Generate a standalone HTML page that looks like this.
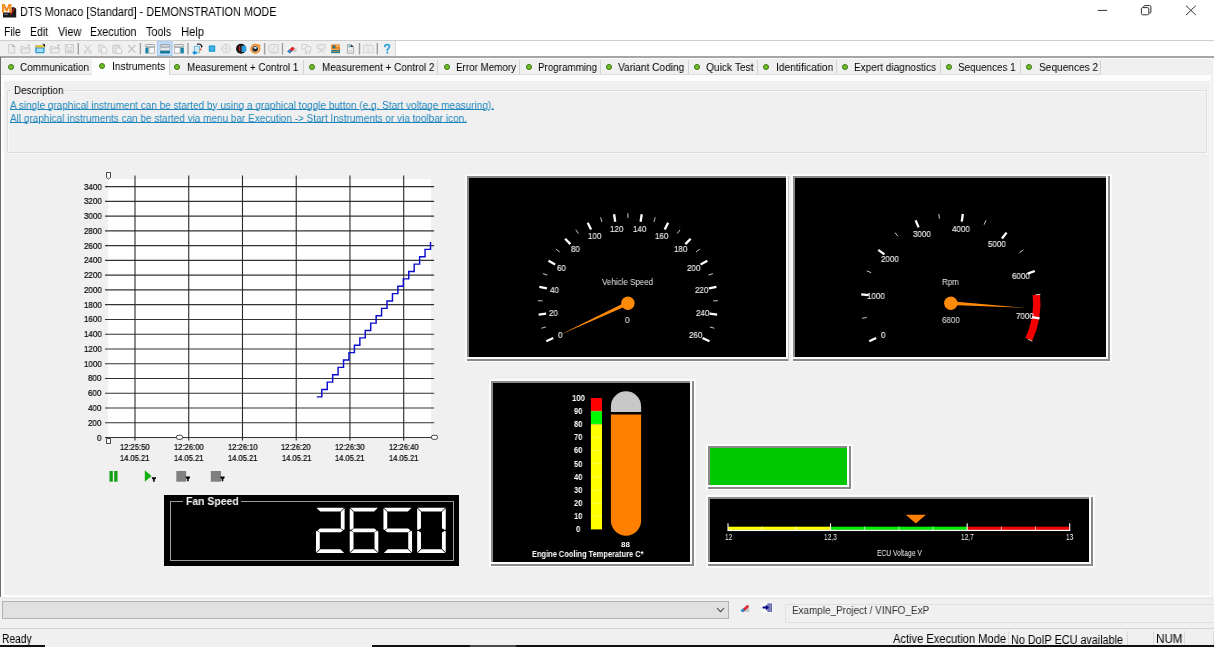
<!DOCTYPE html>
<html><head><meta charset="utf-8"><title>DTS Monaco</title>
<style>
*{margin:0;padding:0;box-sizing:border-box}
html,body{width:1214px;height:647px;overflow:hidden;background:#fff;font-family:"Liberation Sans",sans-serif}
body{position:relative}
.a{position:absolute}
.t{position:absolute;white-space:nowrap;line-height:1;transform-origin:0 50%;will-change:transform}
svg{position:absolute;overflow:visible}
</style></head><body>
<svg style="left:0;top:0" width="20" height="20" viewBox="0 0 20 20">
<path d="M3 12.4h8.6V7.2h2.6l2 1.6v8.8H3z" fill="#1c1c1e"/>
<path d="M10.6 14.6l3.6-6.4" stroke="#c01818" stroke-width="1.3" fill="none"/>
<path d="M4.4 14.4h3.4" stroke="#9a9a9a" stroke-width="0.8"/>
<path d="M2 12.7V3.9h2.7l2 4.6 2-4.6h2.8v8.8H9.2V7.6L7.4 11.6H6L4.3 7.6v5.1z" fill="#f0861a"/>
<path d="M2.8 11.5V4.6h1.1v6.9zM9.8 11.5V4.6h1v6.9z" fill="#fba63c"/>
</svg>
<div class="t" style="left:20.30px;top:5.64px;font-size:12px;color:#000;transform:scaleX(0.9055);">DTS Monaco [Standard] - DEMONSTRATION MODE</div>
<svg style="left:0;top:0" width="1214" height="24" viewBox="0 0 1214 24">
<path d="M1097.7 10.4h9.4" stroke="#333" stroke-width="1" fill="none"/>
<rect x="1141.4" y="7.6" width="7.4" height="7.2" rx="1.2" stroke="#333" stroke-width="1" fill="none"/>
<path d="M1143.6 7.4v-0.6a1.2 1.2 0 0 1 1.2-1.2h4.9a1.2 1.2 0 0 1 1.2 1.2v5.2a1.2 1.2 0 0 1-1.2 1.2h-0.7" stroke="#333" stroke-width="1" fill="none"/>
<path d="M1186 5.7l9.8 9.3M1195.8 5.7l-9.8 9.3" stroke="#333" stroke-width="1" fill="none"/>
</svg>
<div class="t" style="left:4.40px;top:26.04px;font-size:12px;color:#000;transform:scaleX(0.8582);">File</div>
<div class="t" style="left:30.10px;top:26.04px;font-size:12px;color:#000;transform:scaleX(0.8749);">Edit</div>
<div class="t" style="left:57.60px;top:26.04px;font-size:12px;color:#000;transform:scaleX(0.8993);">View</div>
<div class="t" style="left:90.20px;top:26.04px;font-size:12px;color:#000;transform:scaleX(0.8804);">Execution</div>
<div class="t" style="left:146.30px;top:26.04px;font-size:12px;color:#000;transform:scaleX(0.8995);">Tools</div>
<div class="t" style="left:181.10px;top:26.04px;font-size:12px;color:#000;transform:scaleX(0.9316);">Help</div>
<div class="a" style="left:0px;top:40px;width:1214px;height:1.3px;background:#cfcfcf;"></div>
<div class="a" style="left:0px;top:41.3px;width:395px;height:14.7px;background:#f0f0f0;"></div>
<div class="a" style="left:394.5px;top:41px;width:1px;height:15px;background:#d8d8d8;"></div>
<div class="a" style="left:0px;top:55.7px;width:1214px;height:2.2px;background:#a6a6a6;"></div>
<svg style="left:0;top:0" width="400" height="60" viewBox="0 0 400 60"><path d="M8.7 44.5h4l2 2v6.6h-6z" fill="#ededed" stroke="#c9c9c9" stroke-width="0.9"/><path d="M12.5 44.3v2.4h2.3z" fill="#9a9a9a"/><path d="M21 46.5h3l1 1h4.5v5.2h-8.5z" fill="#e6e6e6" stroke="#c9c9c9" stroke-width="0.9"/><path d="M22.5 48.8h8l-1.6 4h-8z" fill="#efefef" stroke="#c9c9c9" stroke-width="0.8"/><path d="M27.5 44.8l2.6 0.3-1 1.6z" fill="#aaa"/><rect x="35.2" y="45.2" width="9.4" height="8" rx="1.2" fill="#2f9fd4"/><rect x="35.2" y="45.2" width="9.4" height="2.4" rx="1" fill="#f1c23e"/><rect x="36.6" y="48.4" width="6.6" height="3.6" rx="0.6" fill="#a5dcf3"/><path d="M42.4 43.6l2.4 0.6 0.6 2.6-1.2-0.6z" fill="#111"/><path d="M50.5 46.5h3l1 1h4.5v5.2h-8.5z" fill="#e6e6e6" stroke="#c9c9c9" stroke-width="0.9"/><path d="M52 48.8h8l-1.6 4h-8z" fill="#efefef" stroke="#c9c9c9" stroke-width="0.8"/><path d="M57 44.6l2.8 0.4-1.2 1.8z" fill="#aaa"/><rect x="65.4" y="44.6" width="8.2" height="8.4" fill="#e6e6e6" stroke="#c9c9c9" stroke-width="0.9"/><rect x="67.2" y="44.8" width="4.6" height="3" fill="#f6f6f6" stroke="#c9c9c9" stroke-width="0.6"/><rect x="67.4" y="50" width="4.4" height="3" fill="#d4d4d4"/><rect x="77.6" y="43" width="1.4" height="11.5" fill="#a0a0a0"/><path d="M84.5 45l5.5 6.5M90.8 45l-5.5 6.5" stroke="#c9c9c9" stroke-width="1.1" fill="none"/><circle cx="85.2" cy="52.2" r="1.2" fill="none" stroke="#c9c9c9" stroke-width="0.9"/><circle cx="90.2" cy="52.2" r="1.2" fill="none" stroke="#c9c9c9" stroke-width="0.9"/><path d="M98.8 45h4l1.5 1.5v5h-5.5z" fill="#ececec" stroke="#c9c9c9" stroke-width="0.9"/><path d="M101.3 47.2h4l1.5 1.5v4.6h-5.5z" fill="#f2f2f2" stroke="#c9c9c9" stroke-width="0.9"/><rect x="112.8" y="45.6" width="7" height="7.4" fill="#e4e4e4" stroke="#c9c9c9" stroke-width="0.9"/><rect x="114.8" y="44.4" width="3" height="1.8" fill="#cfcfcf"/><path d="M116 48h4l1.6 1.5v4h-5.6z" fill="#f2f2f2" stroke="#c9c9c9" stroke-width="0.9"/><path d="M128.3 45l7 7.6M135.3 45l-7 7.6" stroke="#c2c2c2" stroke-width="1.2" fill="none"/><rect x="139.7" y="43" width="1.4" height="11.5" fill="#a0a0a0"/><rect x="145.4" y="44.6" width="9.2" height="2.2" rx="0.8" fill="#f4f4f4" stroke="#8c8c8c" stroke-width="0.8"/><rect x="145.4" y="47.4" width="3" height="6" rx="0.6" fill="#1583a5"/><rect x="149" y="47.6" width="5.6" height="5.6" fill="#fafafa" stroke="#a0a0a0" stroke-width="0.7"/><rect x="157.4" y="41.8" width="14.6" height="13.8" fill="#c5def6" stroke="#98c6f2" stroke-width="0.9"/><rect x="160.2" y="44.6" width="9.6" height="2.4" rx="0.8" fill="#e0e0e0" stroke="#7f8a94" stroke-width="0.8"/><rect x="160.2" y="47.8" width="9.6" height="2.4" rx="0.6" fill="#fafafa" stroke="#9aa4ad" stroke-width="0.7"/><rect x="160" y="50.8" width="10" height="2.6" rx="0.6" fill="#14799b"/><rect x="174.2" y="44.6" width="9.6" height="2.2" rx="0.8" fill="#f4f4f4" stroke="#8c8c8c" stroke-width="0.8"/><rect x="174.4" y="47.6" width="5.6" height="5.6" fill="#fafafa" stroke="#a0a0a0" stroke-width="0.7"/><rect x="180.6" y="47.4" width="3.2" height="6" rx="0.6" fill="#1583a5"/><rect x="187.3" y="43" width="1.4" height="11.5" fill="#a0a0a0"/><rect x="194.2" y="46.2" width="5.4" height="6.6" fill="#cfe9f7" stroke="#4aa7d8" stroke-width="0.7"/><path d="M192.2 52.8l2.6-2.6v1.5h2v2.2h-2v1.4z" fill="#1b8fd0"/><path d="M197 44.4c2.4-1 4.4 0 4.8 1.8" stroke="#111" stroke-width="1.2" fill="none"/><path d="M200.6 45.2l2.2 1-1.6 1.8z" fill="#111"/><circle cx="200.6" cy="49.4" r="0.9" fill="#e43a2a"/><circle cx="199.6" cy="51.2" r="0.8" fill="#f0b030"/><rect x="208.8" y="45.4" width="6.4" height="6.4" fill="#1e98d4"/><rect x="210" y="46.6" width="4" height="4" fill="#43b4e4"/><circle cx="226.2" cy="48.7" r="4.3" fill="#ececec" stroke="#c9c9c9" stroke-width="0.9"/><path d="M226.2 45.5v6.4M224.4 48.7h3.6" stroke="#d0d0d0" stroke-width="0.8"/><circle cx="241" cy="48.8" r="5" fill="#161616"/><path d="M241.6 45.8h3.2l1.6 1.4v3.4l-1.6 1.4h-3.2z" fill="#2a9fe0"/><rect x="239" y="46.2" width="1.4" height="5" fill="#c0242a"/><circle cx="255.4" cy="48.8" r="4.2" fill="none" stroke="#f08a1c" stroke-width="1.7"/><circle cx="255.2" cy="48.8" r="2.9" fill="#20262c"/><path d="M253.4 47.8c1-1.4 2.8-1.4 3.6 0-0.6 1.4-2.6 1.6-3.6 0z" fill="#dfe6ea"/><path d="M258.2 44.2l2.6 0.8-1.8 2z" fill="#f08a1c"/><rect x="263.9" y="43" width="1.4" height="11.5" fill="#a0a0a0"/><rect x="269" y="44.6" width="9.4" height="7.6" rx="0.8" fill="#ececec" stroke="#c9c9c9" stroke-width="0.9"/><path d="M271 50.8l5-4.6" stroke="#d2d2d2" stroke-width="0.9"/><path d="M270.5 53.4h7" stroke="#d6d6d6" stroke-width="0.8"/><rect x="281.8" y="43" width="1.4" height="11.5" fill="#a0a0a0"/><path d="M287.2 51.4l5.2-4.6 3 1.6-5.4 4.8z" fill="#e0242c"/><path d="M287.2 51.4l2-1.8 2.8 1.8-2 1.8z" fill="#1e8fd6"/><path d="M294.6 47.4l2 1v3.6h-3.4z" fill="#cfcfcf"/><rect x="302" y="44.6" width="5.4" height="4.4" fill="#f2f2f2" stroke="#c9c9c9" stroke-width="0.8"/><rect x="305.4" y="46.8" width="5.4" height="4.4" fill="#f2f2f2" stroke="#c9c9c9" stroke-width="0.8"/><path d="M304.5 53.2h2.6M308.2 53.2h2.6M306.5 51.4v1.6" stroke="#c4c4c4" stroke-width="0.8"/><rect x="318.2" y="44.8" width="6.2" height="4.4" fill="#efefef" stroke="#c9c9c9" stroke-width="0.8"/><path d="M321.3 49.4v1.6M318.4 52.6l2.9-1.6 2.9 1.6" stroke="#c4c4c4" stroke-width="0.9" fill="none"/><path d="M316.8 44.6v4M325.8 44.6v4" stroke="#d8d8d8" stroke-width="0.7"/><rect x="331.2" y="44.4" width="8.6" height="5.2" fill="#e8821e"/><rect x="332.6" y="45.6" width="2.6" height="2.6" fill="#1a6f8a"/><rect x="336.2" y="45.4" width="2.4" height="1.2" fill="#f6d7a8"/><rect x="331.2" y="50" width="8.8" height="3.2" fill="#1a7f9c"/><path d="M332 51.6h7" stroke="#e8821e" stroke-width="0.8"/><path d="M338.6 47.6l2 1.6-2 1.4z" fill="#e8821e"/><path d="M347.4 44.6h4l2.2 2.2v6.4h-6.2z" fill="#ededed" stroke="#9a9a9a" stroke-width="0.8"/><path d="M351 44.4v2.6h2.6z" fill="#222"/><rect x="348.6" y="45.6" width="2" height="1.6" fill="#2a8fd0"/><path d="M348.6 50.8h3.6" stroke="#bbb" stroke-width="0.7"/><rect x="358.8" y="43" width="1.4" height="11.5" fill="#a0a0a0"/><rect x="363.6" y="45.4" width="9.6" height="7.4" fill="#ededed" stroke="#d2d2d2" stroke-width="0.9"/><path d="M366 44.4h1.6M369.4 44.4h1.6" stroke="#d0d0d0" stroke-width="0.9"/><path d="M368 47.4v3.6h1.8" stroke="#d4d4d4" stroke-width="0.8" fill="none"/><rect x="376.6" y="43" width="1.4" height="11.5" fill="#a0a0a0"/><path d="M384.9 46.6c0-2.6 4.6-2.6 4.6 0 0 1.6-2.2 1.8-2.2 3.6" stroke="#2f9fdc" stroke-width="1.7" fill="none" stroke-linecap="round"/><circle cx="387.3" cy="52.6" r="1.05" fill="#2f9fdc"/></svg>
<div class="a" style="left:0px;top:57.9px;width:1214px;height:589.1px;background:#f0f0f0;"></div>
<div class="a" style="left:1.4px;top:57.9px;width:1212px;height:1.4px;background:#fbfbfb;"></div>
<div class="a" style="left:1.4px;top:74.9px;width:1210px;height:522.5px;background:#fdfdfd;"></div>
<div class="a" style="left:3.7px;top:80.8px;width:1206.5px;height:513.9px;background:#f0f0f0;"></div>
<div class="a" style="left:1212.6px;top:59px;width:1px;height:538px;background:#fafafa;"></div>
<div class="a" style="left:1.4px;top:597.6px;width:1212px;height:0.8px;background:#e6e6e6;"></div>
<div class="a" style="left:0px;top:57.2px;width:1.35px;height:540.3px;background:#6e6e6e;"></div>
<div class="a" style="left:91.80000000000001px;top:59.6px;width:1px;height:15px;background:#d2d2d2;"></div>
<div class="a" style="left:2px;top:74.1px;width:90.4px;height:0.9px;background:#dedede;"></div>
<div class="a" style="left:8.1px;top:64.1px;width:6.1px;height:6.1px;border-radius:50%;background:#6cc024;border:1.1px solid #3f7412"></div>
<div class="t" style="left:20.40px;top:61.83px;font-size:11px;color:#000;transform:scaleX(0.9029);">Communication</div>
<div class="a" style="left:92.4px;top:59.3px;width:77.4px;height:16px;background:#fdfdfd;"></div>
<div class="a" style="left:169.20000000000002px;top:59.6px;width:1px;height:15px;background:#d2d2d2;"></div>
<div class="a" style="left:99.0px;top:62.9px;width:6.1px;height:6.1px;border-radius:50%;background:#6cc024;border:1.1px solid #3f7412"></div>
<div class="t" style="left:111.60px;top:60.63px;font-size:11px;color:#000;transform:scaleX(0.9240);">Instruments</div>
<div class="a" style="left:302.5px;top:59.6px;width:1px;height:15px;background:#d2d2d2;"></div>
<div class="a" style="left:169.8px;top:74.1px;width:133.3px;height:0.9px;background:#dedede;"></div>
<div class="a" style="left:174.0px;top:64.1px;width:6.1px;height:6.1px;border-radius:50%;background:#6cc024;border:1.1px solid #3f7412"></div>
<div class="t" style="left:186.90px;top:61.83px;font-size:11px;color:#000;transform:scaleX(0.8953);">Measurement + Control 1</div>
<div class="a" style="left:437.4px;top:59.6px;width:1px;height:15px;background:#d2d2d2;"></div>
<div class="a" style="left:303.1px;top:74.1px;width:134.89999999999998px;height:0.9px;background:#dedede;"></div>
<div class="a" style="left:309.0px;top:64.1px;width:6.1px;height:6.1px;border-radius:50%;background:#6cc024;border:1.1px solid #3f7412"></div>
<div class="t" style="left:321.50px;top:61.83px;font-size:11px;color:#000;transform:scaleX(0.9042);">Measurement + Control 2</div>
<div class="a" style="left:519.4px;top:59.6px;width:1px;height:15px;background:#d2d2d2;"></div>
<div class="a" style="left:438px;top:74.1px;width:82px;height:0.9px;background:#dedede;"></div>
<div class="a" style="left:443.5px;top:64.1px;width:6.1px;height:6.1px;border-radius:50%;background:#6cc024;border:1.1px solid #3f7412"></div>
<div class="t" style="left:456.00px;top:61.83px;font-size:11px;color:#000;transform:scaleX(0.8924);">Error Memory</div>
<div class="a" style="left:600.4px;top:59.6px;width:1px;height:15px;background:#d2d2d2;"></div>
<div class="a" style="left:520px;top:74.1px;width:81px;height:0.9px;background:#dedede;"></div>
<div class="a" style="left:525.5px;top:64.1px;width:6.1px;height:6.1px;border-radius:50%;background:#6cc024;border:1.1px solid #3f7412"></div>
<div class="t" style="left:537.50px;top:61.83px;font-size:11px;color:#000;transform:scaleX(0.8935);">Programming</div>
<div class="a" style="left:687.9px;top:59.6px;width:1px;height:15px;background:#d2d2d2;"></div>
<div class="a" style="left:601px;top:74.1px;width:87.5px;height:0.9px;background:#dedede;"></div>
<div class="a" style="left:605.6px;top:64.1px;width:6.1px;height:6.1px;border-radius:50%;background:#6cc024;border:1.1px solid #3f7412"></div>
<div class="t" style="left:618.20px;top:61.83px;font-size:11px;color:#000;transform:scaleX(0.9214);">Variant Coding</div>
<div class="a" style="left:757.1999999999999px;top:59.6px;width:1px;height:15px;background:#d2d2d2;"></div>
<div class="a" style="left:688.5px;top:74.1px;width:69.29999999999995px;height:0.9px;background:#dedede;"></div>
<div class="a" style="left:694.1px;top:64.1px;width:6.1px;height:6.1px;border-radius:50%;background:#6cc024;border:1.1px solid #3f7412"></div>
<div class="t" style="left:706.20px;top:61.83px;font-size:11px;color:#000;transform:scaleX(0.9305);">Quick Test</div>
<div class="a" style="left:836.1px;top:59.6px;width:1px;height:15px;background:#d2d2d2;"></div>
<div class="a" style="left:757.8px;top:74.1px;width:78.90000000000009px;height:0.9px;background:#dedede;"></div>
<div class="a" style="left:762.9px;top:64.1px;width:6.1px;height:6.1px;border-radius:50%;background:#6cc024;border:1.1px solid #3f7412"></div>
<div class="t" style="left:775.50px;top:61.83px;font-size:11px;color:#000;transform:scaleX(0.9261);">Identification</div>
<div class="a" style="left:939.8px;top:59.6px;width:1px;height:15px;background:#d2d2d2;"></div>
<div class="a" style="left:836.7px;top:74.1px;width:103.69999999999993px;height:0.9px;background:#dedede;"></div>
<div class="a" style="left:841.8px;top:64.1px;width:6.1px;height:6.1px;border-radius:50%;background:#6cc024;border:1.1px solid #3f7412"></div>
<div class="t" style="left:854.40px;top:61.83px;font-size:11px;color:#000;transform:scaleX(0.9122);">Expert diagnostics</div>
<div class="a" style="left:1019.6999999999999px;top:59.6px;width:1px;height:15px;background:#d2d2d2;"></div>
<div class="a" style="left:940.4px;top:74.1px;width:79.89999999999998px;height:0.9px;background:#dedede;"></div>
<div class="a" style="left:945.5px;top:64.1px;width:6.1px;height:6.1px;border-radius:50%;background:#6cc024;border:1.1px solid #3f7412"></div>
<div class="t" style="left:958.10px;top:61.83px;font-size:11px;color:#000;transform:scaleX(0.8985);">Sequences 1</div>
<div class="a" style="left:1100.2px;top:59.6px;width:1px;height:15px;background:#d2d2d2;"></div>
<div class="a" style="left:1020.3px;top:74.1px;width:80.5px;height:0.9px;background:#dedede;"></div>
<div class="a" style="left:1026.4px;top:64.1px;width:6.1px;height:6.1px;border-radius:50%;background:#6cc024;border:1.1px solid #3f7412"></div>
<div class="t" style="left:1039.00px;top:61.83px;font-size:11px;color:#000;transform:scaleX(0.9218);">Sequences 2</div>
<div class="a" style="left:7px;top:90.2px;width:1199.6px;height:63.3px;background:transparent;border:1px solid #dddddd;box-shadow:1px 1px 0 #f8f8f8, inset 1px 1px 0 #f8f8f8"></div>
<div class="a" style="left:11px;top:85px;width:55px;height:12px;background:#f0f0f0;"></div>
<div class="t" style="left:13.60px;top:85.43px;font-size:11px;color:#000;transform:scaleX(0.8977);">Description</div>
<div class="t" style="left:10.00px;top:99.93px;font-size:11px;color:#2286bc;transform:scaleX(0.9098);text-decoration:underline;text-decoration-thickness:0.9px;text-underline-offset:0.4px;">A single graphical instrument can be started by using a graphical toggle button (e.g. Start voltage measuring).</div>
<div class="t" style="left:10.00px;top:112.83px;font-size:11px;color:#2286bc;transform:scaleX(0.9076);text-decoration:underline;text-decoration-thickness:0.9px;text-underline-offset:0.4px;">All graphical instruments can be started via menu bar Execution -&gt; Start Instruments or via toolbar icon.</div>
<div class="a" style="left:2.2px;top:601.3px;width:726.6px;height:17.6px;background:#e1e1e1;border:1px solid #b2b2b2"></div>
<svg style="left:0;top:590px" width="800" height="40" viewBox="0 590 800 40">
<path d="M717 608l3.55 3.7 3.55-3.7" stroke="#444" stroke-width="1.05" fill="none"/>
<path d="M746.6 604.8h2.6v7h-4.6z" fill="#c4c4c4"/>
<path d="M741 610.6l6.2-5.6 1.8 1.6-5.6 5.6z" fill="#e0202a"/>
<path d="M740.4 610.4l2.4-1.8 2 2-2.2 1.6z" fill="#1e9ac8"/>
<rect x="762" y="602.4" width="11" height="10.4" fill="#fbfbfb"/>
<rect x="767.4" y="603.4" width="4.6" height="8.6" fill="#5a5aa6"/>
<path d="M769 603.4v8.6M770.6 603.4v8.6" stroke="#b8b8de" stroke-width="0.6"/>
<path d="M762.6 606.6h3.2v-2l3.2 3-3.2 3v-2h-3.2z" fill="#000078"/>
</svg>
<div class="a" style="left:785px;top:603.5px;width:429px;height:19.5px;background:#f0f0f0;border:1px solid #e0e0e0;border-right:none"></div>
<div class="t" style="left:792.20px;top:604.93px;font-size:11px;color:#333;transform:scaleX(0.9006);">Example_Project / VINFO_ExP</div>
<div class="a" style="left:0px;top:628px;width:1214px;height:1px;background:#d4d4d4;"></div>
<div class="t" style="left:2.00px;top:632.64px;font-size:12px;color:#000;transform:scaleX(0.8533);">Ready</div>
<div class="t" style="left:893.20px;top:632.64px;font-size:12px;color:#000;transform:scaleX(0.9258);">Active Execution Mode</div>
<div class="t" style="left:1011.00px;top:633.64px;font-size:12px;color:#000;transform:scaleX(0.8995);">No DoIP ECU available</div>
<div class="t" style="left:1155.50px;top:632.64px;font-size:12px;color:#000;transform:scaleX(0.9697);">NUM</div>
<div class="a" style="left:1007.9px;top:631px;width:1px;height:14px;background:#dadada;"></div>
<div class="a" style="left:1126.5px;top:631px;width:1px;height:14px;background:#dadada;"></div>
<div class="a" style="left:1152.9px;top:631px;width:1px;height:14px;background:#dadada;"></div>
<div class="a" style="left:1184.2px;top:631px;width:1px;height:14px;background:#dadada;"></div>
<div class="a" style="left:1212.5px;top:631px;width:1px;height:14px;background:#dadada;"></div>
<div class="a" style="left:0px;top:645px;width:45px;height:2px;background:#111;"></div>
<div class="a" style="left:372px;top:645px;width:842px;height:2px;background:#111;"></div>
<div class="a" style="left:470px;top:645px;width:46px;height:2px;background:#4a4a4a;"></div>
<div class="a" style="left:108px;top:179px;width:323px;height:258.5px;background:#fff;"></div>
<svg style="left:0;top:0" width="1214" height="647" viewBox="0 0 1214 647" shape-rendering="auto">
<path d="M105 437.45H434.1" stroke="#333" stroke-width="1.1"/>
<path d="M105 422.70H434.1" stroke="#333" stroke-width="1.1"/>
<path d="M105 407.94H434.1" stroke="#333" stroke-width="1.1"/>
<path d="M105 393.19H434.1" stroke="#333" stroke-width="1.1"/>
<path d="M105 378.44H434.1" stroke="#333" stroke-width="1.1"/>
<path d="M105 363.69H434.1" stroke="#333" stroke-width="1.1"/>
<path d="M105 348.93H434.1" stroke="#333" stroke-width="1.1"/>
<path d="M105 334.18H434.1" stroke="#333" stroke-width="1.1"/>
<path d="M105 319.43H434.1" stroke="#333" stroke-width="1.1"/>
<path d="M105 304.67H434.1" stroke="#333" stroke-width="1.1"/>
<path d="M105 289.92H434.1" stroke="#333" stroke-width="1.1"/>
<path d="M105 275.17H434.1" stroke="#333" stroke-width="1.1"/>
<path d="M105 260.41H434.1" stroke="#333" stroke-width="1.1"/>
<path d="M105 245.66H434.1" stroke="#333" stroke-width="1.1"/>
<path d="M105 230.91H434.1" stroke="#333" stroke-width="1.1"/>
<path d="M105 216.15H434.1" stroke="#333" stroke-width="1.1"/>
<path d="M105 201.40H434.1" stroke="#333" stroke-width="1.1"/>
<path d="M105 186.65H434.1" stroke="#333" stroke-width="1.1"/>
<path d="M135.00 175.5V440.5" stroke="#2a2a2a" stroke-width="1.1"/>
<path d="M188.74 175.5V440.5" stroke="#2a2a2a" stroke-width="1.1"/>
<path d="M242.48 175.5V440.5" stroke="#2a2a2a" stroke-width="1.1"/>
<path d="M296.22 175.5V440.5" stroke="#2a2a2a" stroke-width="1.1"/>
<path d="M349.96 175.5V440.5" stroke="#2a2a2a" stroke-width="1.1"/>
<path d="M403.70 175.5V440.5" stroke="#2a2a2a" stroke-width="1.1"/>
<path d="M316.80 396.88 L321.80 396.88 L321.80 389.50 L327.24 389.50 L327.24 382.13 L332.67 382.13 L332.67 374.75 L338.11 374.75 L338.11 367.37 L343.54 367.37 L343.54 360.00 L348.98 360.00 L348.98 352.62 L354.41 352.62 L354.41 345.24 L359.85 345.24 L359.85 337.87 L365.28 337.87 L365.28 330.49 L370.72 330.49 L370.72 323.11 L376.15 323.11 L376.15 315.74 L381.59 315.74 L381.59 308.36 L387.02 308.36 L387.02 300.98 L392.46 300.98 L392.46 293.61 L397.89 293.61 L397.89 286.23 L403.33 286.23 L403.33 278.86 L408.76 278.86 L408.76 271.48 L414.20 271.48 L414.20 264.10 L419.63 264.10 L419.63 256.73 L425.07 256.73 L425.07 249.35 L430.50 249.35 L430.50 241.97" stroke="#0c0ccc" stroke-width="1.45" fill="none"/>
<path d="M106.5 172.5h4v5l-2 1.5l-2-1.5z" fill="#fff" stroke="#333" stroke-width="0.9"/>
<path d="M106.5 438.5h4v5h-4z" fill="#fff" stroke="#333" stroke-width="0.9"/>
<rect x="176.5" y="435.3" width="6" height="4" rx="1.6" fill="#fff" stroke="#333" stroke-width="0.9"/>
<rect x="431.5" y="435.3" width="6" height="4" rx="1.6" fill="#fff" stroke="#333" stroke-width="0.9"/>
<rect x="109.5" y="471" width="3.3" height="10.7" fill="#12a012"/><rect x="114.2" y="471" width="3.3" height="10.7" fill="#12a012"/>
<path d="M144.8 470.3v11.4l6.8-5.7z" fill="#12b012"/><path d="M151.8 477.2h4.2v1.3l-1.3 1.1v2.2h-1.6v-2.2l-1.3-1.1z" fill="#000"/>
<rect x="176.3" y="471" width="9.9" height="10.7" fill="#808080"/><path d="M185.8 476.6h4.2v1.3l-1.3 1.1v2.2h-1.6v-2.2l-1.3-1.1z" fill="#000"/>
<rect x="210.8" y="471" width="10.2" height="10.7" fill="#808080"/><path d="M220.4 476.6h4.2v1.3l-1.3 1.1v2.2h-1.6v-2.2l-1.3-1.1z" fill="#000"/>
</svg>
<div class="t" style="left:97.15px;top:433.50px;font-size:8.7px;color:#000;transform:scaleX(0.9195);-webkit-text-stroke:0.22px #000;">0</div>
<div class="t" style="left:88.27px;top:418.75px;font-size:8.7px;color:#000;transform:scaleX(0.9195);-webkit-text-stroke:0.22px #000;">200</div>
<div class="t" style="left:88.27px;top:403.99px;font-size:8.7px;color:#000;transform:scaleX(0.9195);-webkit-text-stroke:0.22px #000;">400</div>
<div class="t" style="left:88.27px;top:389.24px;font-size:8.7px;color:#000;transform:scaleX(0.9195);-webkit-text-stroke:0.22px #000;">600</div>
<div class="t" style="left:88.27px;top:374.49px;font-size:8.7px;color:#000;transform:scaleX(0.9195);-webkit-text-stroke:0.22px #000;">800</div>
<div class="t" style="left:83.83px;top:359.74px;font-size:8.7px;color:#000;transform:scaleX(0.9195);-webkit-text-stroke:0.22px #000;">1000</div>
<div class="t" style="left:83.83px;top:344.98px;font-size:8.7px;color:#000;transform:scaleX(0.9195);-webkit-text-stroke:0.22px #000;">1200</div>
<div class="t" style="left:83.83px;top:330.23px;font-size:8.7px;color:#000;transform:scaleX(0.9195);-webkit-text-stroke:0.22px #000;">1400</div>
<div class="t" style="left:83.83px;top:315.48px;font-size:8.7px;color:#000;transform:scaleX(0.9195);-webkit-text-stroke:0.22px #000;">1600</div>
<div class="t" style="left:83.83px;top:300.72px;font-size:8.7px;color:#000;transform:scaleX(0.9195);-webkit-text-stroke:0.22px #000;">1800</div>
<div class="t" style="left:83.83px;top:285.97px;font-size:8.7px;color:#000;transform:scaleX(0.9195);-webkit-text-stroke:0.22px #000;">2000</div>
<div class="t" style="left:83.83px;top:271.22px;font-size:8.7px;color:#000;transform:scaleX(0.9195);-webkit-text-stroke:0.22px #000;">2200</div>
<div class="t" style="left:83.83px;top:256.46px;font-size:8.7px;color:#000;transform:scaleX(0.9195);-webkit-text-stroke:0.22px #000;">2400</div>
<div class="t" style="left:83.83px;top:241.71px;font-size:8.7px;color:#000;transform:scaleX(0.9195);-webkit-text-stroke:0.22px #000;">2600</div>
<div class="t" style="left:83.83px;top:226.96px;font-size:8.7px;color:#000;transform:scaleX(0.9195);-webkit-text-stroke:0.22px #000;">2800</div>
<div class="t" style="left:83.83px;top:212.21px;font-size:8.7px;color:#000;transform:scaleX(0.9195);-webkit-text-stroke:0.22px #000;">3000</div>
<div class="t" style="left:83.83px;top:197.45px;font-size:8.7px;color:#000;transform:scaleX(0.9195);-webkit-text-stroke:0.22px #000;">3200</div>
<div class="t" style="left:83.83px;top:182.70px;font-size:8.7px;color:#000;transform:scaleX(0.9195);-webkit-text-stroke:0.22px #000;">3400</div>
<div class="t" style="left:120.20px;top:442.85px;font-size:8.7px;color:#000;transform:scaleX(0.8750);-webkit-text-stroke:0.22px #000;">12:25:50</div>
<div class="t" style="left:120.30px;top:453.75px;font-size:8.7px;color:#000;transform:scaleX(0.8691);-webkit-text-stroke:0.22px #000;">14.05.21</div>
<div class="t" style="left:173.94px;top:442.85px;font-size:8.7px;color:#000;transform:scaleX(0.8750);-webkit-text-stroke:0.22px #000;">12:26:00</div>
<div class="t" style="left:174.04px;top:453.75px;font-size:8.7px;color:#000;transform:scaleX(0.8691);-webkit-text-stroke:0.22px #000;">14.05.21</div>
<div class="t" style="left:227.68px;top:442.85px;font-size:8.7px;color:#000;transform:scaleX(0.8750);-webkit-text-stroke:0.22px #000;">12:26:10</div>
<div class="t" style="left:227.78px;top:453.75px;font-size:8.7px;color:#000;transform:scaleX(0.8691);-webkit-text-stroke:0.22px #000;">14.05.21</div>
<div class="t" style="left:281.42px;top:442.85px;font-size:8.7px;color:#000;transform:scaleX(0.8750);-webkit-text-stroke:0.22px #000;">12:26:20</div>
<div class="t" style="left:281.52px;top:453.75px;font-size:8.7px;color:#000;transform:scaleX(0.8691);-webkit-text-stroke:0.22px #000;">14.05.21</div>
<div class="t" style="left:335.16px;top:442.85px;font-size:8.7px;color:#000;transform:scaleX(0.8750);-webkit-text-stroke:0.22px #000;">12:26:30</div>
<div class="t" style="left:335.26px;top:453.75px;font-size:8.7px;color:#000;transform:scaleX(0.8691);-webkit-text-stroke:0.22px #000;">14.05.21</div>
<div class="t" style="left:388.90px;top:442.85px;font-size:8.7px;color:#000;transform:scaleX(0.8750);-webkit-text-stroke:0.22px #000;">12:26:40</div>
<div class="t" style="left:389.00px;top:453.75px;font-size:8.7px;color:#000;transform:scaleX(0.8691);-webkit-text-stroke:0.22px #000;">14.05.21</div>
<div class="a" style="left:465.10px;top:174.00px;width:326.70px;height:188.20px;background:#fbfbfb;clip-path:inset(0 3.30px 0 0);"><div class="a" style="left:2px;top:2px;right:1.7px;bottom:1.7px;background:#8a8a8a"><div class="a" style="left:0;top:0;right:1.8px;bottom:1.8px;background:#fcfcfc"><div class="a" style="left:0;top:0;right:2.2px;bottom:2.2px;background:#8a8a8a"><div class="a" style="left:2px;top:2px;right:0;bottom:0;background:#000"></div></div></div></div></div>
<svg style="left:0;top:0" width="1214" height="647" viewBox="0 0 1214 647"><path d="M553.22 338.02L546.33 341.24" stroke="#fff" stroke-width="2.3"/><path d="M545.97 326.93L541.45 328.24" stroke="#c8c8c8" stroke-width="1"/><path d="M546.17 313.68L538.63 314.65" stroke="#fff" stroke-width="2.3"/><path d="M542.63 300.91L537.93 300.78" stroke="#c8c8c8" stroke-width="1"/><path d="M546.85 288.35L539.37 286.98" stroke="#fff" stroke-width="2.3"/><path d="M547.36 275.10L542.92 273.56" stroke="#c8c8c8" stroke-width="1"/><path d="M555.20 264.42L548.49 260.84" stroke="#fff" stroke-width="2.3"/><path d="M559.71 251.96L555.95 249.13" stroke="#c8c8c8" stroke-width="1"/><path d="M570.42 244.16L565.12 238.71" stroke="#fff" stroke-width="2.3"/><path d="M578.51 233.66L575.78 229.82" stroke="#c8c8c8" stroke-width="1"/><path d="M591.08 229.48L587.69 222.68" stroke="#fff" stroke-width="2.3"/><path d="M601.98 221.93L600.55 217.46" stroke="#c8c8c8" stroke-width="1"/><path d="M615.23 221.78L614.06 214.27" stroke="#fff" stroke-width="2.3"/><path d="M627.90 217.90L627.90 213.20" stroke="#c8c8c8" stroke-width="1"/><path d="M640.57 221.78L641.74 214.27" stroke="#fff" stroke-width="2.3"/><path d="M653.82 221.93L655.25 217.46" stroke="#c8c8c8" stroke-width="1"/><path d="M664.72 229.48L668.11 222.68" stroke="#fff" stroke-width="2.3"/><path d="M677.29 233.66L680.02 229.82" stroke="#c8c8c8" stroke-width="1"/><path d="M685.38 244.16L690.68 238.71" stroke="#fff" stroke-width="2.3"/><path d="M696.09 251.96L699.85 249.13" stroke="#c8c8c8" stroke-width="1"/><path d="M700.60 264.42L707.31 260.84" stroke="#fff" stroke-width="2.3"/><path d="M708.44 275.10L712.88 273.56" stroke="#c8c8c8" stroke-width="1"/><path d="M708.95 288.35L716.43 286.98" stroke="#fff" stroke-width="2.3"/><path d="M713.17 300.91L717.87 300.78" stroke="#c8c8c8" stroke-width="1"/><path d="M709.63 313.68L717.17 314.65" stroke="#fff" stroke-width="2.3"/><path d="M709.83 326.93L714.35 328.24" stroke="#c8c8c8" stroke-width="1"/><path d="M702.58 338.02L709.47 341.24" stroke="#fff" stroke-width="2.3"/><path d="M628.70 304.92L559.02 335.32L627.10 301.48z" fill="#ff8a0a"/><circle cx="627.9" cy="303.2" r="6.7" fill="#ff8a0a"/></svg>
<div class="t" style="left:557.70px;top:330.85px;font-size:8.7px;color:#ececec;transform:scaleX(0.9195);-webkit-text-stroke:0.15px #ececec;">0</div>
<div class="t" style="left:549.06px;top:308.69px;font-size:8.7px;color:#ececec;transform:scaleX(0.9195);-webkit-text-stroke:0.15px #ececec;">20</div>
<div class="t" style="left:549.68px;top:285.63px;font-size:8.7px;color:#ececec;transform:scaleX(0.9195);-webkit-text-stroke:0.15px #ececec;">40</div>
<div class="t" style="left:557.28px;top:263.85px;font-size:8.7px;color:#ececec;transform:scaleX(0.9195);-webkit-text-stroke:0.15px #ececec;">60</div>
<div class="t" style="left:571.14px;top:245.41px;font-size:8.7px;color:#ececec;transform:scaleX(0.9195);-webkit-text-stroke:0.15px #ececec;">80</div>
<div class="t" style="left:587.72px;top:232.05px;font-size:8.7px;color:#ececec;transform:scaleX(0.9195);-webkit-text-stroke:0.15px #ececec;">100</div>
<div class="t" style="left:609.70px;top:225.04px;font-size:8.7px;color:#ececec;transform:scaleX(0.9195);-webkit-text-stroke:0.15px #ececec;">120</div>
<div class="t" style="left:632.77px;top:225.04px;font-size:8.7px;color:#ececec;transform:scaleX(0.9195);-webkit-text-stroke:0.15px #ececec;">140</div>
<div class="t" style="left:654.74px;top:232.05px;font-size:8.7px;color:#ececec;transform:scaleX(0.9195);-webkit-text-stroke:0.15px #ececec;">160</div>
<div class="t" style="left:673.55px;top:245.41px;font-size:8.7px;color:#ececec;transform:scaleX(0.9195);-webkit-text-stroke:0.15px #ececec;">180</div>
<div class="t" style="left:687.41px;top:263.85px;font-size:8.7px;color:#ececec;transform:scaleX(0.9195);-webkit-text-stroke:0.15px #ececec;">200</div>
<div class="t" style="left:695.00px;top:285.63px;font-size:8.7px;color:#ececec;transform:scaleX(0.9195);-webkit-text-stroke:0.15px #ececec;">220</div>
<div class="t" style="left:695.62px;top:308.69px;font-size:8.7px;color:#ececec;transform:scaleX(0.9195);-webkit-text-stroke:0.15px #ececec;">240</div>
<div class="t" style="left:689.21px;top:330.85px;font-size:8.7px;color:#ececec;transform:scaleX(0.9195);-webkit-text-stroke:0.15px #ececec;">260</div>
<div class="t" style="left:601.95px;top:277.75px;font-size:8.7px;color:#e8e8e8;transform:scaleX(0.9195);">Vehicle Speed</div>
<div class="t" style="left:625.47px;top:315.75px;font-size:8.7px;color:#e8e8e8;transform:scaleX(0.9195);">0</div>
<div class="a" style="left:791.00px;top:174.00px;width:320.80px;height:188.20px;background:#fbfbfb;"><div class="a" style="left:2px;top:2px;right:1.7px;bottom:1.7px;background:#8a8a8a"><div class="a" style="left:0;top:0;right:1.8px;bottom:1.8px;background:#fcfcfc"><div class="a" style="left:0;top:0;right:2.2px;bottom:2.2px;background:#8a8a8a"><div class="a" style="left:2px;top:2px;right:0;bottom:0;background:#000"></div></div></div></div></div>
<svg style="left:0;top:0" width="1214" height="647" viewBox="0 0 1214 647"><path d="M1036.38 294.71A86 86 0 0 1 1028.74 339.55" stroke="#f40000" stroke-width="7.4" fill="none"/><path d="M876.12 338.02L869.23 341.24" stroke="#fff" stroke-width="2.3"/><path d="M866.71 317.52L862.08 318.31" stroke="#c8c8c8" stroke-width="1"/><path d="M868.80 295.06L861.24 294.31" stroke="#fff" stroke-width="2.3"/><path d="M871.17 272.63L866.78 270.95" stroke="#c8c8c8" stroke-width="1"/><path d="M884.42 254.38L878.30 249.88" stroke="#fff" stroke-width="2.3"/><path d="M897.89 236.29L894.98 232.60" stroke="#c8c8c8" stroke-width="1"/><path d="M918.60 227.35L915.63 220.35" stroke="#fff" stroke-width="2.3"/><path d="M939.42 218.66L938.79 214.00" stroke="#c8c8c8" stroke-width="1"/><path d="M961.79 221.54L962.81 214.00" stroke="#fff" stroke-width="2.3"/><path d="M984.13 224.68L985.97 220.35" stroke="#c8c8c8" stroke-width="1"/><path d="M1001.91 238.56L1006.62 232.60" stroke="#fff" stroke-width="2.3"/><path d="M1019.52 252.66L1023.30 249.88" stroke="#c8c8c8" stroke-width="1"/><path d="M1027.73 273.67L1034.82 270.95" stroke="#fff" stroke-width="2.3"/><path d="M1035.68 294.78L1040.36 294.31" stroke="#c8c8c8" stroke-width="1"/><path d="M1032.03 317.04L1039.52 318.31" stroke="#fff" stroke-width="2.3"/><path d="M1028.11 339.25L1032.37 341.24" stroke="#c8c8c8" stroke-width="1"/><path d="M950.92 301.30L1026.66 307.88L950.68 305.10z" fill="#ff8a0a"/><circle cx="950.8" cy="303.2" r="6.7" fill="#ff8a0a"/></svg>
<div class="t" style="left:880.60px;top:330.85px;font-size:8.7px;color:#ececec;transform:scaleX(0.9195);-webkit-text-stroke:0.15px #ececec;">0</div>
<div class="t" style="left:867.28px;top:291.74px;font-size:8.7px;color:#ececec;transform:scaleX(0.9195);-webkit-text-stroke:0.15px #ececec;">1000</div>
<div class="t" style="left:881.49px;top:254.71px;font-size:8.7px;color:#ececec;transform:scaleX(0.9195);-webkit-text-stroke:0.15px #ececec;">2000</div>
<div class="t" style="left:912.61px;top:230.11px;font-size:8.7px;color:#ececec;transform:scaleX(0.9195);-webkit-text-stroke:0.15px #ececec;">3000</div>
<div class="t" style="left:951.92px;top:224.82px;font-size:8.7px;color:#ececec;transform:scaleX(0.9195);-webkit-text-stroke:0.15px #ececec;">4000</div>
<div class="t" style="left:988.43px;top:240.32px;font-size:8.7px;color:#ececec;transform:scaleX(0.9195);-webkit-text-stroke:0.15px #ececec;">5000</div>
<div class="t" style="left:1011.93px;top:272.27px;font-size:8.7px;color:#ececec;transform:scaleX(0.9195);-webkit-text-stroke:0.15px #ececec;">6000</div>
<div class="t" style="left:1015.85px;top:311.74px;font-size:8.7px;color:#ececec;transform:scaleX(0.9195);-webkit-text-stroke:0.15px #ececec;">7000</div>
<div class="t" style="left:941.97px;top:277.75px;font-size:8.7px;color:#e8e8e8;transform:scaleX(0.9195);">Rpm</div>
<div class="t" style="left:941.71px;top:315.75px;font-size:8.7px;color:#e8e8e8;transform:scaleX(0.9195);">6800</div>
<div class="a" style="left:489.20px;top:379.20px;width:206.50px;height:188.30px;background:#fbfbfb;"><div class="a" style="left:2px;top:2px;right:1.7px;bottom:1.7px;background:#8a8a8a"><div class="a" style="left:0;top:0;right:1.8px;bottom:1.8px;background:#fcfcfc"><div class="a" style="left:0;top:0;right:2.2px;bottom:2.2px;background:#8a8a8a"><div class="a" style="left:2px;top:2px;right:0;bottom:0;background:#000"></div></div></div></div></div>
<svg style="left:0;top:0" width="1214" height="647" viewBox="0 0 1214 647"><rect x="590.9" y="398.00" width="11.1" height="13.14" fill="#ff0000"/><rect x="590.9" y="411.14" width="11.1" height="13.14" fill="#00fa00"/><rect x="590.9" y="424.28" width="11.1" height="105.12" fill="#ffff00"/><rect x="590.9" y="515.76" width="11.1" height="1" fill="#fff" opacity="0.28"/><rect x="590.9" y="502.62" width="11.1" height="1" fill="#fff" opacity="0.28"/><rect x="590.9" y="489.48" width="11.1" height="1" fill="#fff" opacity="0.28"/><rect x="590.9" y="476.34" width="11.1" height="1" fill="#fff" opacity="0.28"/><rect x="590.9" y="463.20" width="11.1" height="1" fill="#fff" opacity="0.28"/><rect x="590.9" y="450.06" width="11.1" height="1" fill="#fff" opacity="0.28"/><rect x="590.9" y="436.92" width="11.1" height="1" fill="#fff" opacity="0.28"/><rect x="590.9" y="423.78" width="11.1" height="1" fill="#fff" opacity="0.28"/><rect x="590.9" y="410.64" width="11.1" height="1" fill="#fff" opacity="0.28"/><path d="M610.9 412.1V406.30A15.100000000000023 15.100000000000023 0 0 1 641.1 406.30V412.1z" fill="#c8c8c8"/><path d="M610.9 414.6H641.1V520.60A15.100000000000023 15.100000000000023 0 0 1 610.9 520.60z" fill="#ff8000"/></svg>
<div class="t" style="left:575.95px;top:525.30px;font-size:9px;color:#fff;font-weight:700;transform:scaleX(0.8573);">0</div>
<div class="t" style="left:573.90px;top:512.16px;font-size:9px;color:#fff;font-weight:700;transform:scaleX(0.8387);">10</div>
<div class="t" style="left:573.90px;top:499.02px;font-size:9px;color:#fff;font-weight:700;transform:scaleX(0.8387);">20</div>
<div class="t" style="left:573.90px;top:485.88px;font-size:9px;color:#fff;font-weight:700;transform:scaleX(0.8387);">30</div>
<div class="t" style="left:573.90px;top:472.74px;font-size:9px;color:#fff;font-weight:700;transform:scaleX(0.8387);">40</div>
<div class="t" style="left:573.90px;top:459.60px;font-size:9px;color:#fff;font-weight:700;transform:scaleX(0.8387);">50</div>
<div class="t" style="left:573.90px;top:446.46px;font-size:9px;color:#fff;font-weight:700;transform:scaleX(0.8387);">60</div>
<div class="t" style="left:573.90px;top:433.32px;font-size:9px;color:#fff;font-weight:700;transform:scaleX(0.8387);">70</div>
<div class="t" style="left:573.90px;top:420.18px;font-size:9px;color:#fff;font-weight:700;transform:scaleX(0.8387);">80</div>
<div class="t" style="left:573.90px;top:407.04px;font-size:9px;color:#fff;font-weight:700;transform:scaleX(0.8387);">90</div>
<div class="t" style="left:571.60px;top:393.90px;font-size:9px;color:#fff;font-weight:700;transform:scaleX(0.8649);">100</div>
<div class="t" style="left:620.95px;top:541.39px;font-size:8px;color:#fff;font-weight:700;">88</div>
<div class="t" style="left:532.05px;top:549.95px;font-size:8.7px;color:#fff;font-weight:700;transform:scaleX(0.8566);">Engine Cooling Temperature C*</div>
<div class="a" style="left:705.60px;top:443.60px;width:147.20px;height:46.90px;background:#fbfbfb;"><div class="a" style="left:2px;top:2px;right:1.7px;bottom:1.7px;background:#8a8a8a"><div class="a" style="left:0;top:0;right:1.8px;bottom:1.8px;background:#fcfcfc"><div class="a" style="left:0;top:0;right:2.2px;bottom:2.2px;background:#8a8a8a"><div class="a" style="left:2px;top:2px;right:0;bottom:0;background:#00c800"></div></div></div></div></div>
<div class="a" style="left:706.00px;top:494.60px;width:388.50px;height:73.10px;background:#fbfbfb;"><div class="a" style="left:2px;top:2px;right:1.7px;bottom:1.7px;background:#8a8a8a"><div class="a" style="left:0;top:0;right:1.8px;bottom:1.8px;background:#fcfcfc"><div class="a" style="left:0;top:0;right:2.2px;bottom:2.2px;background:#8a8a8a"><div class="a" style="left:2px;top:2px;right:0;bottom:0;background:#000"></div></div></div></div></div>
<svg style="left:0;top:0" width="1214" height="647" viewBox="0 0 1214 647"><rect x="728.00" y="526.7" width="102.51" height="3.2" fill="#ffff00"/><rect x="830.51" y="526.7" width="136.68" height="3.2" fill="#00ee00"/><rect x="967.19" y="526.7" width="102.51" height="3.2" fill="#f40000"/><rect x="727.50" y="529.8" width="342.70" height="1.25" fill="#fff"/><path d="M728.00 523.3V530.6" stroke="#fff" stroke-width="1.1"/><path d="M762.17 526.6V530.6" stroke="#fff" stroke-width="1" opacity="0.7"/><path d="M796.34 526.6V530.6" stroke="#fff" stroke-width="1" opacity="0.7"/><path d="M830.51 523.3V530.6" stroke="#fff" stroke-width="1.1"/><path d="M864.68 526.6V530.6" stroke="#fff" stroke-width="1" opacity="0.7"/><path d="M898.85 526.6V530.6" stroke="#fff" stroke-width="1" opacity="0.7"/><path d="M933.02 526.6V530.6" stroke="#fff" stroke-width="1" opacity="0.7"/><path d="M967.19 523.3V530.6" stroke="#fff" stroke-width="1.1"/><path d="M1001.36 526.6V530.6" stroke="#fff" stroke-width="1" opacity="0.7"/><path d="M1035.53 526.6V530.6" stroke="#fff" stroke-width="1" opacity="0.7"/><path d="M1069.70 523.3V530.6" stroke="#fff" stroke-width="1.1"/><path d="M905.8 514.7H925.9L915.85 523.4z" fill="#ff8000"/></svg>
<div class="t" style="left:725.05px;top:533.35px;font-size:8.7px;color:#f0f0f0;transform:scaleX(0.7548);">12</div>
<div class="t" style="left:824.40px;top:533.35px;font-size:8.7px;color:#f0f0f0;transform:scaleX(0.7682);">12,3</div>
<div class="t" style="left:960.90px;top:533.35px;font-size:8.7px;color:#f0f0f0;transform:scaleX(0.7564);">12,7</div>
<div class="t" style="left:1066.35px;top:533.35px;font-size:8.7px;color:#f0f0f0;transform:scaleX(0.7548);">13</div>
<div class="t" style="left:876.70px;top:548.75px;font-size:8.7px;color:#f0f0f0;transform:scaleX(0.7730);">ECU Voltage V</div>
<div class="a" style="left:163.6px;top:494.9px;width:295.5px;height:71.1px;background:#000;"></div>
<div class="a" style="left:169.9px;top:501.2px;width:283.7px;height:59.9px;background:transparent;border:1.3px solid #9c9c9c"></div>
<div class="a" style="left:182.8px;top:497px;width:58.3px;height:9px;background:#000;"></div>
<div class="t" style="left:186.00px;top:496.43px;font-size:11px;color:#f4f4f4;font-weight:700;transform:scaleX(0.9474);">Fan Speed</div>
<svg style="left:0;top:0" width="1214" height="647" viewBox="0 0 1214 647"><path d="M316.45 507.80L344.15 507.80L340.35 511.60L320.25 511.60z" fill="#fff"/><path d="M344.60 508.25L340.80 512.05L340.80 528.23L343.70 530.02L344.60 529.20z" fill="#fff"/><path d="M317.65 530.40L319.87 528.50L340.73 528.50L342.95 530.40L340.73 532.30L319.87 532.30z" fill="#fff"/><path d="M316.00 552.55L319.80 548.75L319.80 532.57L316.90 530.78L316.00 531.60z" fill="#fff"/><path d="M316.45 553.00L344.15 553.00L340.35 549.20L320.25 549.20z" fill="#fff"/><path d="M350.17 507.80L377.87 507.80L374.07 511.60L353.97 511.60z" fill="#fff"/><path d="M349.72 508.25L353.52 512.05L353.52 528.23L350.62 530.02L349.72 529.20z" fill="#fff"/><path d="M351.37 530.40L353.59 528.50L374.45 528.50L376.67 530.40L374.45 532.30L353.59 532.30z" fill="#fff"/><path d="M349.72 552.55L353.52 548.75L353.52 532.57L350.62 530.78L349.72 531.60z" fill="#fff"/><path d="M350.17 553.00L377.87 553.00L374.07 549.20L353.97 549.20z" fill="#fff"/><path d="M378.32 552.55L374.52 548.75L374.52 532.57L377.42 530.78L378.32 531.60z" fill="#fff"/><path d="M383.89 507.80L411.59 507.80L407.79 511.60L387.69 511.60z" fill="#fff"/><path d="M383.44 508.25L387.24 512.05L387.24 528.23L384.34 530.02L383.44 529.20z" fill="#fff"/><path d="M385.09 530.40L387.31 528.50L408.17 528.50L410.39 530.40L408.17 532.30L387.31 532.30z" fill="#fff"/><path d="M412.04 552.55L408.24 548.75L408.24 532.57L411.14 530.78L412.04 531.60z" fill="#fff"/><path d="M383.89 553.00L411.59 553.00L407.79 549.20L387.69 549.20z" fill="#fff"/><path d="M417.61 507.80L445.31 507.80L441.51 511.60L421.41 511.60z" fill="#fff"/><path d="M445.76 508.25L441.96 512.05L441.96 528.23L444.86 530.02L445.76 529.20z" fill="#fff"/><path d="M445.76 552.55L441.96 548.75L441.96 532.57L444.86 530.78L445.76 531.60z" fill="#fff"/><path d="M417.61 553.00L445.31 553.00L441.51 549.20L421.41 549.20z" fill="#fff"/><path d="M417.16 552.55L420.96 548.75L420.96 532.57L418.06 530.78L417.16 531.60z" fill="#fff"/><path d="M417.16 508.25L420.96 512.05L420.96 528.23L418.06 530.02L417.16 529.20z" fill="#fff"/></svg>
</body></html>
